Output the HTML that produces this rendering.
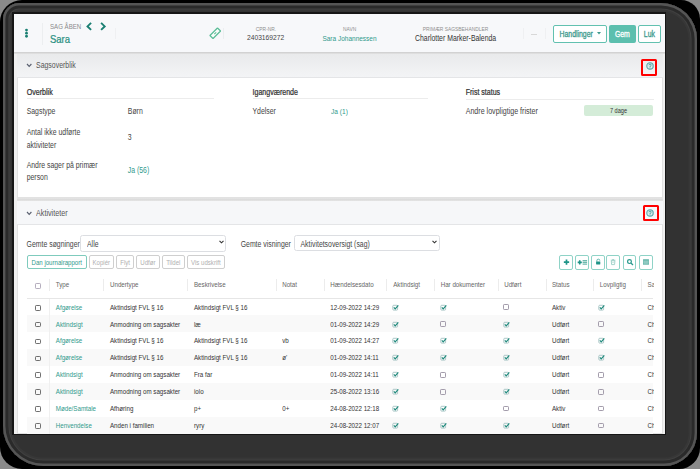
<!DOCTYPE html>
<html><head><meta charset="utf-8">
<style>
html,body{margin:0;padding:0;width:700px;height:469px;overflow:hidden;background:#8a8a8a;font-family:"Liberation Sans",sans-serif;}
.t{position:absolute;white-space:nowrap;line-height:1.15;}
.b{position:absolute;}
</style></head><body>
<div class="b" style="left:0.00px;top:0.00px;width:700.00px;height:469.00px;background:#000;border-radius:22px 19px 21px 22px"></div>
<div class="b" style="left:3.00px;top:3.00px;width:694.00px;height:463.00px;border-radius:16px 36px 33px 40px;background:#323232;box-shadow:inset 0 0 0 2.4px #555, inset 0 0 0 5.4px #2a2a2a, inset 0 0 0 6.4px #404040, inset 0 0 0 8.4px #373737"></div>
<div class="b" style="left:12.30px;top:12.30px;width:654.00px;height:423.00px;background:#161616"></div>
<div class="b" style="left:14.00px;top:14.00px;width:651.00px;height:420.00px;background:#f0f0f0"></div>
<div class="b" style="left:14.00px;top:14.00px;width:651.00px;height:38.00px;background:#f7f8fa;border-bottom:1.3px solid #d2d2d2"></div>
<svg class="b" style="left:23.70px;top:28.20px" width="5" height="10.5" viewBox="0 0 5 10.5"><circle cx="2.5" cy="2.05" r="1.4" fill="#1a7f72"/><circle cx="2.5" cy="5.15" r="1.4" fill="#1a7f72"/><circle cx="2.5" cy="8.25" r="1.4" fill="#1a7f72"/></svg>
<div class="b" style="left:41.60px;top:23.00px;width:1.00px;height:21.50px;background:#eceef0"></div>
<div class="t" style="left:50.00px;top:22.34px;font-size:6.1px;color:#8a8a8a;font-weight:400;transform:scaleY(1.28);">SAG ÅBEN</div>
<svg class="b" style="left:86.00px;top:21.80px" width="22" height="9" viewBox="0 0 22 9"><path d="M5.1 0.9 L1.5 4.4 L5.1 7.9 M15.1 0.9 L18.7 4.4 L15.1 7.9" fill="none" stroke="#1a7f72" stroke-width="1.9"/></svg>
<div class="t" style="left:50.00px;top:35.05px;font-size:9.5px;color:#2a9081;font-weight:400;transform:scaleY(1.18);-webkit-text-stroke:0.2px #2a9081">Sara</div>
<div class="b" style="left:114.50px;top:28.00px;width:1.00px;height:10.60px;background:#eff0f2"></div>
<svg class="b" style="left:208.60px;top:27.40px" width="12.5" height="12.5" viewBox="0 0 12.5 12.5"><g transform="rotate(-45 6.25 6.25)"><rect x="0.9" y="4.05" width="10.7" height="4.4" rx="0.4" fill="#fafcfb" stroke="#5bbd97" stroke-width="1.25"/><path d="M4.9 6.25 H7.6" stroke="#5bbd97" stroke-width="1.0"/></g></svg>
<div class="b" style="left:223.20px;top:27.80px;width:1.00px;height:11.00px;background:#eceef0"></div>
<div class="t" style="left:266.00px;top:26.59px;font-size:4.9px;color:#8f8f8f;font-weight:400;transform:translateX(-50%) scaleY(1.18);">CPR-NR.</div>
<div class="t" style="left:265.60px;top:34.20px;font-size:6.7px;color:#444;font-weight:400;transform:translateX(-50%) scaleY(1.18);">2403169272</div>
<div class="t" style="left:349.70px;top:26.59px;font-size:4.9px;color:#8f8f8f;font-weight:400;transform:translateX(-50%) scaleY(1.18);">NAVN</div>
<div class="t" style="left:349.50px;top:35.01px;font-size:6.5px;color:#309a8c;font-weight:400;transform:translateX(-50%) scaleY(1.18);">Sara Johannessen</div>
<div class="t" style="left:455.50px;top:26.59px;font-size:4.9px;color:#8f8f8f;font-weight:400;transform:translateX(-50%) scaleY(1.18);">PRIMÆR SAGSBEHANDLER</div>
<div class="t" style="left:455.60px;top:34.79px;font-size:6.9px;color:#333;font-weight:400;transform:translateX(-50%) scaleY(1.18);">Charlotter Marker-Balenda</div>
<div class="b" style="left:523.00px;top:28.00px;width:1.00px;height:10.60px;background:#eff0f2"></div>
<div class="b" style="left:531.00px;top:33.50px;width:6.00px;height:0.80px;background:#d8d8d8"></div>
<div class="b" style="left:545.00px;top:28.00px;width:1.00px;height:10.60px;background:#eff0f2"></div>
<div class="b" style="left:553.30px;top:24.80px;width:54.20px;height:17.80px;box-sizing:border-box;border:1.2px solid #62c1b0;border-radius:2px;background:#fff"></div>
<div class="t" style="left:559.50px;top:31.09px;font-size:6.9px;color:#3d9a8d;font-weight:400;transform:scaleY(1.18);-webkit-text-stroke:0.25px #3d9a8d">Handlinger</div>
<svg class="b" style="left:597.40px;top:32.30px" width="4" height="3" viewBox="0 0 4 3"><path d="M0 0 H4 L2 2.4Z" fill="#3d9a8d"/></svg>
<div class="b" style="left:609.00px;top:24.80px;width:26.80px;height:17.80px;background:#5cbfae;border-radius:2px"></div>
<div class="t" style="left:622.40px;top:31.09px;font-size:6.9px;color:#fff;font-weight:400;transform:translateX(-50%) scaleY(1.18);-webkit-text-stroke:0.25px #fff">Gem</div>
<div class="b" style="left:637.80px;top:24.80px;width:23.20px;height:17.80px;box-sizing:border-box;border:1.2px solid #62c1b0;border-radius:2px;background:#fff"></div>
<div class="t" style="left:649.40px;top:31.09px;font-size:6.9px;color:#3d9a8d;font-weight:400;transform:translateX(-50%) scaleY(1.18);-webkit-text-stroke:0.25px #3d9a8d">Luk</div>
<div class="b" style="left:16.80px;top:53.50px;width:646.20px;height:144.50px;box-sizing:border-box;background:#fff;border:1px solid #e2e2e2"></div>
<div class="b" style="left:16.80px;top:197.50px;width:646.20px;height:3.50px;background:linear-gradient(#e6e6e6,#dcdcdc 50%,#e4e4e4)"></div>
<div class="b" style="left:16.80px;top:53.50px;width:646.20px;height:24.00px;box-sizing:border-box;background:linear-gradient(#e9eaeb,#f3f4f6);border-bottom:1px solid #e4e5e7"></div>
<div class="b" style="left:14.00px;top:53.30px;width:651.00px;height:1.20px;background:#dedede"></div>
<svg class="b" style="left:26.00px;top:63.20px" width="6" height="5" viewBox="0 0 6 5"><path d="M1.0 1.0 L3.2 3.3 L5.4 1.0" fill="none" stroke="#5a6070" stroke-width="1.15"/></svg>
<div class="t" style="left:36.00px;top:61.66px;font-size:6.95px;color:#555;font-weight:400;transform:scaleY(1.18);">Sagsoverblik</div>
<div class="b" style="left:641.00px;top:58.70px;width:15.80px;height:16.90px;box-sizing:border-box;border:2px solid #f00;border-radius:1.5px"></div>
<svg class="b" style="left:646.20px;top:62.00px" width="8" height="8" viewBox="0 0 8 8"><circle cx="4" cy="4" r="3.2" fill="#d9ecec" stroke="#5aa6a8" stroke-width="1.1"/><path d="M3.0 3.2 a1.05 1.05 0 1 1 1.5 0.9 L4 4.7 V5.1" fill="none" stroke="#2f8f92" stroke-width="0.9"/><circle cx="4" cy="6.0" r="0.5" fill="#2f8f92"/></svg>
<div class="t" style="left:26.70px;top:88.58px;font-size:7.1px;color:#333;font-weight:400;transform:scaleY(1.18);-webkit-text-stroke:0.2px #333">Overblik</div>
<div class="b" style="left:26.70px;top:98.20px;width:187.00px;height:1.00px;background:#ececec"></div>
<div class="t" style="left:26.70px;top:107.89px;font-size:6.9px;color:#444;font-weight:400;transform:scaleY(1.18);">Sagstype</div>
<div class="t" style="left:127.80px;top:107.89px;font-size:6.9px;color:#444;font-weight:400;transform:scaleY(1.18);">Børn</div>
<div class="t" style="left:26.70px;top:129.49px;font-size:6.9px;color:#444;font-weight:400;transform:scaleY(1.18);">Antal ikke udførte</div>
<div class="t" style="left:26.70px;top:141.69px;font-size:6.9px;color:#444;font-weight:400;transform:scaleY(1.18);">aktiviteter</div>
<div class="t" style="left:127.80px;top:134.49px;font-size:6.9px;color:#444;font-weight:400;transform:scaleY(1.18);">3</div>
<div class="t" style="left:26.70px;top:162.19px;font-size:6.9px;color:#444;font-weight:400;transform:scaleY(1.18);">Andre sager på primær</div>
<div class="t" style="left:26.70px;top:173.69px;font-size:6.9px;color:#444;font-weight:400;transform:scaleY(1.18);">person</div>
<div class="t" style="left:127.80px;top:167.19px;font-size:6.9px;color:#309a8c;font-weight:400;transform:scaleY(1.18);">Ja (56)</div>
<div class="t" style="left:252.50px;top:88.60px;font-size:7.05px;color:#333;font-weight:400;transform:scaleY(1.18);-webkit-text-stroke:0.2px #333">Igangværende</div>
<div class="b" style="left:252.50px;top:98.20px;width:175.50px;height:1.00px;background:#ececec"></div>
<div class="t" style="left:252.50px;top:107.89px;font-size:6.9px;color:#444;font-weight:400;transform:scaleY(1.18);">Ydelser</div>
<div class="t" style="left:331.00px;top:108.05px;font-size:6.6px;color:#309a8c;font-weight:400;transform:scaleY(1.18);">Ja (1)</div>
<div class="t" style="left:465.70px;top:88.60px;font-size:7.05px;color:#333;font-weight:400;transform:scaleY(1.18);-webkit-text-stroke:0.2px #333">Frist status</div>
<div class="b" style="left:465.70px;top:98.70px;width:188.00px;height:1.00px;background:#ececec"></div>
<div class="t" style="left:465.70px;top:107.98px;font-size:7.1px;color:#444;font-weight:400;transform:scaleY(1.18);">Andre lovpligtige frister</div>
<div class="b" style="left:584.30px;top:105.20px;width:68.50px;height:10.80px;background:#d4ecd8;border-radius:2px"></div>
<div class="t" style="left:618.50px;top:107.91px;font-size:5.6px;color:#333;font-weight:400;transform:translateX(-50%) scaleY(1.18);">7 dage</div>
<div class="b" style="left:16.80px;top:201.00px;width:646.20px;height:233.00px;box-sizing:border-box;background:#fff;border:1px solid #e2e2e2"></div>
<div class="b" style="left:16.80px;top:201.00px;width:646.20px;height:23.60px;box-sizing:border-box;background:#f6f7f9;border-bottom:1px solid #e4e5e7"></div>
<svg class="b" style="left:26.00px;top:211.20px" width="6" height="5" viewBox="0 0 6 5"><path d="M1.0 1.0 L3.2 3.3 L5.4 1.0" fill="none" stroke="#5a6070" stroke-width="1.15"/></svg>
<div class="t" style="left:36.00px;top:209.82px;font-size:7.2px;color:#555;font-weight:400;transform:scaleY(1.18);">Aktiviteter</div>
<div class="b" style="left:642.70px;top:204.80px;width:16.20px;height:16.20px;box-sizing:border-box;border:2px solid #f00;border-radius:1.5px"></div>
<svg class="b" style="left:646.20px;top:208.90px" width="8" height="8" viewBox="0 0 8 8"><circle cx="4" cy="4" r="3.2" fill="#d9ecec" stroke="#5aa6a8" stroke-width="1.1"/><path d="M3.0 3.2 a1.05 1.05 0 1 1 1.5 0.9 L4 4.7 V5.1" fill="none" stroke="#2f8f92" stroke-width="0.9"/><circle cx="4" cy="6.0" r="0.5" fill="#2f8f92"/></svg>
<div class="t" style="left:26.60px;top:240.59px;font-size:6.9px;color:#444;font-weight:400;transform:scaleY(1.18);">Gemte søgninger</div>
<div class="b" style="left:80.00px;top:234.70px;width:146.30px;height:17.30px;box-sizing:border-box;border:1px solid #dcdee2;border-radius:2.5px;background:#fff"></div>
<div class="t" style="left:87.00px;top:240.69px;font-size:6.9px;color:#444;font-weight:400;transform:scaleY(1.18);">Alle</div>
<svg class="b" style="left:218.60px;top:240.40px" width="5" height="4" viewBox="0 0 5 4"><path d="M0.5 0.8 L2.5 2.8 L4.5 0.8" fill="none" stroke="#333" stroke-width="1.1"/></svg>
<div class="t" style="left:240.70px;top:240.59px;font-size:6.9px;color:#444;font-weight:400;transform:scaleY(1.18);">Gemte visninger</div>
<div class="b" style="left:294.20px;top:234.60px;width:145.60px;height:16.90px;box-sizing:border-box;border:1px solid #dcdee2;border-radius:2.5px;background:#fff"></div>
<div class="t" style="left:300.50px;top:240.69px;font-size:6.9px;color:#444;font-weight:400;transform:scaleY(1.18);">Aktivitetsoversigt (sag)</div>
<svg class="b" style="left:432.10px;top:240.30px" width="5" height="4" viewBox="0 0 5 4"><path d="M0.5 0.8 L2.5 2.8 L4.5 0.8" fill="none" stroke="#333" stroke-width="1.1"/></svg>
<div class="b" style="left:26.90px;top:255.40px;width:59.70px;height:14.10px;box-sizing:border-box;border:1px solid #7fcbbd;border-radius:2px;background:#fff"></div>
<div class="t" style="left:56.75px;top:259.13px;font-size:6.1px;color:#309a8c;font-weight:400;transform:translateX(-50%) scaleY(1.18);">Dan journalrapport</div>
<div class="b" style="left:88.50px;top:255.40px;width:25.50px;height:14.10px;box-sizing:border-box;border:1px solid #cfcfcf;border-radius:2px;background:#fff"></div>
<div class="t" style="left:101.25px;top:259.13px;font-size:6.1px;color:#b0b0b0;font-weight:400;transform:translateX(-50%) scaleY(1.18);">Kopiér</div>
<div class="b" style="left:116.20px;top:255.40px;width:17.90px;height:14.10px;box-sizing:border-box;border:1px solid #cfcfcf;border-radius:2px;background:#fff"></div>
<div class="t" style="left:125.15px;top:259.13px;font-size:6.1px;color:#b0b0b0;font-weight:400;transform:translateX(-50%) scaleY(1.18);">Flyt</div>
<div class="b" style="left:136.30px;top:255.40px;width:23.30px;height:14.10px;box-sizing:border-box;border:1px solid #cfcfcf;border-radius:2px;background:#fff"></div>
<div class="t" style="left:147.95px;top:259.13px;font-size:6.1px;color:#b0b0b0;font-weight:400;transform:translateX(-50%) scaleY(1.18);">Udfør</div>
<div class="b" style="left:161.80px;top:255.40px;width:23.00px;height:14.10px;box-sizing:border-box;border:1px solid #cfcfcf;border-radius:2px;background:#fff"></div>
<div class="t" style="left:173.30px;top:259.13px;font-size:6.1px;color:#b0b0b0;font-weight:400;transform:translateX(-50%) scaleY(1.18);">Tildel</div>
<div class="b" style="left:187.00px;top:255.40px;width:37.70px;height:14.10px;box-sizing:border-box;border:1px solid #cfcfcf;border-radius:2px;background:#fff"></div>
<div class="t" style="left:205.85px;top:259.13px;font-size:6.1px;color:#b0b0b0;font-weight:400;transform:translateX(-50%) scaleY(1.18);">Vis udskrift</div>
<div class="b" style="left:559.00px;top:255.10px;width:13.70px;height:14.60px;box-sizing:border-box;border:1px solid #8fd3c7;border-radius:2px;background:#fff"></div>
<svg class="b" style="left:559.00px;top:255.10px" width="13.7" height="14.6" viewBox="0 0 13.7 14.6"><path d="M7.5 4.4 V9.7 M4.85 7.05 H10.15" stroke="#1f9488" stroke-width="1.7"/></svg>
<div class="b" style="left:574.90px;top:255.10px;width:13.70px;height:14.60px;box-sizing:border-box;border:1px solid #8fd3c7;border-radius:2px;background:#fff"></div>
<svg class="b" style="left:574.90px;top:255.10px" width="13.7" height="14.6" viewBox="0 0 13.7 14.6"><path d="M4.75 5.3 V9.4 M2.7 7.35 H6.8" stroke="#1f9488" stroke-width="1.6"/><path d="M7.6 5.6 H12.1 M7.6 7.35 H12.1 M7.6 9.1 H12.1" stroke="#6db9ae" stroke-width="1.2"/></svg>
<div class="b" style="left:590.90px;top:255.10px;width:13.70px;height:14.60px;box-sizing:border-box;border:1px solid #8fd3c7;border-radius:2px;background:#fff"></div>
<svg class="b" style="left:590.90px;top:255.10px" width="13.7" height="14.6" viewBox="0 0 13.7 14.6"><path d="M5.9 6.6 V5.6 a1.45 1.45 0 0 1 2.9 0" fill="none" stroke="#4fb0a4" stroke-width="0.9"/><rect x="5.1" y="6.5" width="4.2" height="2.9" rx="0.3" fill="#1f9488"/></svg>
<div class="b" style="left:606.40px;top:255.10px;width:13.70px;height:14.60px;box-sizing:border-box;border:1px solid #8fd3c7;border-radius:2px;background:#fff"></div>
<svg class="b" style="left:606.40px;top:255.10px" width="13.7" height="14.6" viewBox="0 0 13.7 14.6"><path d="M5.3 5.8 L5.6 9.6 H8.6 L8.9 5.8 Z M4.8 5.2 H9.4 M6.2 4.5 H8" fill="none" stroke="#9acfc6" stroke-width="0.9"/><path d="M5.5 7.6 H8.7" stroke="#b9ddd7" stroke-width="0.7"/></svg>
<div class="b" style="left:622.50px;top:255.10px;width:13.70px;height:14.60px;box-sizing:border-box;border:1px solid #8fd3c7;border-radius:2px;background:#fff"></div>
<svg class="b" style="left:622.50px;top:255.10px" width="13.7" height="14.6" viewBox="0 0 13.7 14.6"><circle cx="6.5" cy="6.6" r="1.9" fill="none" stroke="#2a9a8e" stroke-width="1.2"/><path d="M7.9 8 L10 9.9" stroke="#2a9a8e" stroke-width="1.3"/></svg>
<div class="b" style="left:638.90px;top:255.10px;width:13.70px;height:14.60px;box-sizing:border-box;border:1px solid #8fd3c7;border-radius:2px;background:#fff"></div>
<svg class="b" style="left:638.90px;top:255.10px" width="13.7" height="14.6" viewBox="0 0 13.7 14.6"><rect x="4" y="4.2" width="6" height="5.5" rx="0.4" fill="#5fb3a7"/><path d="M4 6.1 H10 M4 7.9 H10 M6 6.1 V9.7 M8 6.1 V9.7" stroke="#c9e6e1" stroke-width="0.5"/></svg>
<div class="b" style="left:26.9px;top:272px;width:626.7px;height:162px;overflow:hidden">
<div class="b" style="left:22.30px;top:7.30px;width:1.00px;height:11.40px;background:#ececec"></div>
<div class="b" style="left:76.40px;top:7.30px;width:1.00px;height:11.40px;background:#ececec"></div>
<div class="b" style="left:160.40px;top:7.30px;width:1.00px;height:11.40px;background:#ececec"></div>
<div class="b" style="left:248.80px;top:7.30px;width:1.00px;height:11.40px;background:#ececec"></div>
<div class="b" style="left:296.80px;top:7.30px;width:1.00px;height:11.40px;background:#ececec"></div>
<div class="b" style="left:359.30px;top:7.30px;width:1.00px;height:11.40px;background:#ececec"></div>
<div class="b" style="left:406.80px;top:7.30px;width:1.00px;height:11.40px;background:#ececec"></div>
<div class="b" style="left:470.80px;top:7.30px;width:1.00px;height:11.40px;background:#ececec"></div>
<div class="b" style="left:518.80px;top:7.30px;width:1.00px;height:11.40px;background:#ececec"></div>
<div class="b" style="left:566.10px;top:7.30px;width:1.00px;height:11.40px;background:#ececec"></div>
<div class="b" style="left:614.00px;top:7.30px;width:1.00px;height:11.40px;background:#ececec"></div>
<div class="t" style="left:28.90px;top:9.17px;font-size:6.2px;color:#666;font-weight:400;transform:scaleY(1.18);">Type</div>
<div class="t" style="left:83.10px;top:9.17px;font-size:6.2px;color:#666;font-weight:400;transform:scaleY(1.18);">Undertype</div>
<div class="t" style="left:167.10px;top:9.17px;font-size:6.2px;color:#666;font-weight:400;transform:scaleY(1.18);">Beskrivelse</div>
<div class="t" style="left:255.30px;top:9.17px;font-size:6.2px;color:#666;font-weight:400;transform:scaleY(1.18);">Notat</div>
<div class="t" style="left:303.40px;top:9.17px;font-size:6.2px;color:#666;font-weight:400;transform:scaleY(1.18);">Hændelsesdato</div>
<div class="t" style="left:366.30px;top:9.17px;font-size:6.2px;color:#666;font-weight:400;transform:scaleY(1.18);">Aktindsigt</div>
<div class="t" style="left:413.80px;top:9.17px;font-size:6.2px;color:#666;font-weight:400;transform:scaleY(1.18);">Har dokumenter</div>
<div class="t" style="left:477.30px;top:9.17px;font-size:6.2px;color:#666;font-weight:400;transform:scaleY(1.18);">Udført</div>
<div class="t" style="left:525.10px;top:9.17px;font-size:6.2px;color:#666;font-weight:400;transform:scaleY(1.18);">Status</div>
<div class="t" style="left:572.90px;top:9.17px;font-size:6.2px;color:#666;font-weight:400;transform:scaleY(1.18);">Lovpligtig</div>
<div class="t" style="left:620.70px;top:9.17px;font-size:6.2px;color:#666;font-weight:400;transform:scaleY(1.18);">Sagsbehandler</div>
<div class="b" style="left:8.10px;top:10.80px;width:6.30px;height:6.30px;box-sizing:border-box;border:0.8px solid #b4adbd;border-radius:1.2px"></div>
<div class="b" style="left:0.00px;top:25.60px;width:626.50px;height:1.00px;background:#e6e6e6"></div>
<div class="b" style="left:22.00px;top:26.50px;width:1.00px;height:16.90px;background:#f0f0f0"></div>
<div class="b" style="left:8.20px;top:32.80px;width:6.00px;height:5.80px;box-sizing:border-box;border:1px solid #6f6f6f;border-radius:1.2px"></div>
<div class="t" style="left:28.90px;top:31.67px;font-size:6.2px;color:#309a8c;font-weight:400;transform:scaleY(1.18);">Afgørelse</div>
<div class="t" style="left:83.10px;top:31.67px;font-size:6.2px;color:#333;font-weight:400;transform:scaleY(1.18);">Aktindsigt FVL § 16</div>
<div class="t" style="left:167.10px;top:31.67px;font-size:6.2px;color:#333;font-weight:400;transform:scaleY(1.18);">Aktindsigt FVL § 16</div>
<div class="t" style="left:303.40px;top:31.67px;font-size:6.2px;color:#333;font-weight:400;transform:scaleY(1.18);">12-09-2022 14:29</div>
<svg class="b" style="left:365.60px;top:31.60px" width="7" height="7" viewBox="0 0 7 7"><rect x="0.8" y="1.3" width="4.8" height="4.8" rx="0.8" fill="none" stroke="#9bb" stroke-width="0.8"/><path d="M1.8 3.4 L3.2 4.8 L6.3 1.4" fill="none" stroke="#1f8a7c" stroke-width="1.2"/></svg>
<svg class="b" style="left:413.30px;top:31.60px" width="7" height="7" viewBox="0 0 7 7"><rect x="0.8" y="1.3" width="4.8" height="4.8" rx="0.8" fill="none" stroke="#9bb" stroke-width="0.8"/><path d="M1.8 3.4 L3.2 4.8 L6.3 1.4" fill="none" stroke="#1f8a7c" stroke-width="1.2"/></svg>
<div class="b" style="left:476.40px;top:32.20px;width:6.00px;height:5.90px;box-sizing:border-box;border:0.85px solid #a39cab;border-radius:1.2px"></div>
<div class="t" style="left:525.10px;top:31.67px;font-size:6.2px;color:#333;font-weight:400;transform:scaleY(1.18);">Aktiv</div>
<svg class="b" style="left:571.60px;top:31.60px" width="7" height="7" viewBox="0 0 7 7"><rect x="0.8" y="1.3" width="4.8" height="4.8" rx="0.8" fill="none" stroke="#9bb" stroke-width="0.8"/><path d="M1.8 3.4 L3.2 4.8 L6.3 1.4" fill="none" stroke="#1f8a7c" stroke-width="1.2"/></svg>
<div class="t" style="left:620.70px;top:31.67px;font-size:6.2px;color:#333;font-weight:400;transform:scaleY(1.18);">Charlotter Marker-Balenda</div>
<div class="b" style="left:0.00px;top:43.40px;width:626.50px;height:16.90px;background:#f9f9f9"></div>
<div class="b" style="left:22.00px;top:43.40px;width:1.00px;height:16.90px;background:#f0f0f0"></div>
<div class="b" style="left:8.20px;top:49.70px;width:6.00px;height:5.80px;box-sizing:border-box;border:1px solid #6f6f6f;border-radius:1.2px"></div>
<div class="t" style="left:28.90px;top:48.57px;font-size:6.2px;color:#309a8c;font-weight:400;transform:scaleY(1.18);">Aktindsigt</div>
<div class="t" style="left:83.10px;top:48.57px;font-size:6.2px;color:#333;font-weight:400;transform:scaleY(1.18);">Anmodning om sagsakter</div>
<div class="t" style="left:167.10px;top:48.57px;font-size:6.2px;color:#333;font-weight:400;transform:scaleY(1.18);">læ</div>
<div class="t" style="left:303.40px;top:48.57px;font-size:6.2px;color:#333;font-weight:400;transform:scaleY(1.18);">01-09-2022 14:29</div>
<svg class="b" style="left:365.60px;top:48.50px" width="7" height="7" viewBox="0 0 7 7"><rect x="0.8" y="1.3" width="4.8" height="4.8" rx="0.8" fill="none" stroke="#9bb" stroke-width="0.8"/><path d="M1.8 3.4 L3.2 4.8 L6.3 1.4" fill="none" stroke="#1f8a7c" stroke-width="1.2"/></svg>
<div class="b" style="left:413.30px;top:49.10px;width:6.00px;height:5.90px;box-sizing:border-box;border:0.85px solid #a39cab;border-radius:1.2px"></div>
<svg class="b" style="left:476.40px;top:48.50px" width="7" height="7" viewBox="0 0 7 7"><rect x="0.8" y="1.3" width="4.8" height="4.8" rx="0.8" fill="none" stroke="#9bb" stroke-width="0.8"/><path d="M1.8 3.4 L3.2 4.8 L6.3 1.4" fill="none" stroke="#1f8a7c" stroke-width="1.2"/></svg>
<div class="t" style="left:525.10px;top:48.57px;font-size:6.2px;color:#333;font-weight:400;transform:scaleY(1.18);">Udført</div>
<div class="b" style="left:571.60px;top:49.10px;width:6.00px;height:5.90px;box-sizing:border-box;border:0.85px solid #a39cab;border-radius:1.2px"></div>
<div class="t" style="left:620.70px;top:48.57px;font-size:6.2px;color:#333;font-weight:400;transform:scaleY(1.18);">Charlotter Marker-Balenda</div>
<div class="b" style="left:22.00px;top:60.30px;width:1.00px;height:16.90px;background:#f0f0f0"></div>
<div class="b" style="left:8.20px;top:66.60px;width:6.00px;height:5.80px;box-sizing:border-box;border:1px solid #6f6f6f;border-radius:1.2px"></div>
<div class="t" style="left:28.90px;top:65.47px;font-size:6.2px;color:#309a8c;font-weight:400;transform:scaleY(1.18);">Afgørelse</div>
<div class="t" style="left:83.10px;top:65.47px;font-size:6.2px;color:#333;font-weight:400;transform:scaleY(1.18);">Aktindsigt FVL § 16</div>
<div class="t" style="left:167.10px;top:65.47px;font-size:6.2px;color:#333;font-weight:400;transform:scaleY(1.18);">Aktindsigt FVL § 16</div>
<div class="t" style="left:255.30px;top:65.47px;font-size:6.2px;color:#333;font-weight:400;transform:scaleY(1.18);">vb</div>
<div class="t" style="left:303.40px;top:65.47px;font-size:6.2px;color:#333;font-weight:400;transform:scaleY(1.18);">01-09-2022 14:27</div>
<svg class="b" style="left:365.60px;top:65.40px" width="7" height="7" viewBox="0 0 7 7"><rect x="0.8" y="1.3" width="4.8" height="4.8" rx="0.8" fill="none" stroke="#9bb" stroke-width="0.8"/><path d="M1.8 3.4 L3.2 4.8 L6.3 1.4" fill="none" stroke="#1f8a7c" stroke-width="1.2"/></svg>
<svg class="b" style="left:413.30px;top:65.40px" width="7" height="7" viewBox="0 0 7 7"><rect x="0.8" y="1.3" width="4.8" height="4.8" rx="0.8" fill="none" stroke="#9bb" stroke-width="0.8"/><path d="M1.8 3.4 L3.2 4.8 L6.3 1.4" fill="none" stroke="#1f8a7c" stroke-width="1.2"/></svg>
<svg class="b" style="left:476.40px;top:65.40px" width="7" height="7" viewBox="0 0 7 7"><rect x="0.8" y="1.3" width="4.8" height="4.8" rx="0.8" fill="none" stroke="#9bb" stroke-width="0.8"/><path d="M1.8 3.4 L3.2 4.8 L6.3 1.4" fill="none" stroke="#1f8a7c" stroke-width="1.2"/></svg>
<div class="t" style="left:525.10px;top:65.47px;font-size:6.2px;color:#333;font-weight:400;transform:scaleY(1.18);">Udført</div>
<svg class="b" style="left:571.60px;top:65.40px" width="7" height="7" viewBox="0 0 7 7"><rect x="0.8" y="1.3" width="4.8" height="4.8" rx="0.8" fill="none" stroke="#9bb" stroke-width="0.8"/><path d="M1.8 3.4 L3.2 4.8 L6.3 1.4" fill="none" stroke="#1f8a7c" stroke-width="1.2"/></svg>
<div class="t" style="left:620.70px;top:65.47px;font-size:6.2px;color:#333;font-weight:400;transform:scaleY(1.18);">Charlotter Marker-Balenda</div>
<div class="b" style="left:0.00px;top:77.20px;width:626.50px;height:16.90px;background:#f9f9f9"></div>
<div class="b" style="left:22.00px;top:77.20px;width:1.00px;height:16.90px;background:#f0f0f0"></div>
<div class="b" style="left:8.20px;top:83.50px;width:6.00px;height:5.80px;box-sizing:border-box;border:1px solid #6f6f6f;border-radius:1.2px"></div>
<div class="t" style="left:28.90px;top:82.37px;font-size:6.2px;color:#309a8c;font-weight:400;transform:scaleY(1.18);">Afgørelse</div>
<div class="t" style="left:83.10px;top:82.37px;font-size:6.2px;color:#333;font-weight:400;transform:scaleY(1.18);">Aktindsigt FVL § 16</div>
<div class="t" style="left:167.10px;top:82.37px;font-size:6.2px;color:#333;font-weight:400;transform:scaleY(1.18);">Aktindsigt FVL § 16</div>
<div class="t" style="left:255.30px;top:82.37px;font-size:6.2px;color:#333;font-weight:400;transform:scaleY(1.18);">ø'</div>
<div class="t" style="left:303.40px;top:82.37px;font-size:6.2px;color:#333;font-weight:400;transform:scaleY(1.18);">01-09-2022 14:11</div>
<svg class="b" style="left:365.60px;top:82.30px" width="7" height="7" viewBox="0 0 7 7"><rect x="0.8" y="1.3" width="4.8" height="4.8" rx="0.8" fill="none" stroke="#9bb" stroke-width="0.8"/><path d="M1.8 3.4 L3.2 4.8 L6.3 1.4" fill="none" stroke="#1f8a7c" stroke-width="1.2"/></svg>
<svg class="b" style="left:413.30px;top:82.30px" width="7" height="7" viewBox="0 0 7 7"><rect x="0.8" y="1.3" width="4.8" height="4.8" rx="0.8" fill="none" stroke="#9bb" stroke-width="0.8"/><path d="M1.8 3.4 L3.2 4.8 L6.3 1.4" fill="none" stroke="#1f8a7c" stroke-width="1.2"/></svg>
<svg class="b" style="left:476.40px;top:82.30px" width="7" height="7" viewBox="0 0 7 7"><rect x="0.8" y="1.3" width="4.8" height="4.8" rx="0.8" fill="none" stroke="#9bb" stroke-width="0.8"/><path d="M1.8 3.4 L3.2 4.8 L6.3 1.4" fill="none" stroke="#1f8a7c" stroke-width="1.2"/></svg>
<div class="t" style="left:525.10px;top:82.37px;font-size:6.2px;color:#333;font-weight:400;transform:scaleY(1.18);">Udført</div>
<svg class="b" style="left:571.60px;top:82.30px" width="7" height="7" viewBox="0 0 7 7"><rect x="0.8" y="1.3" width="4.8" height="4.8" rx="0.8" fill="none" stroke="#9bb" stroke-width="0.8"/><path d="M1.8 3.4 L3.2 4.8 L6.3 1.4" fill="none" stroke="#1f8a7c" stroke-width="1.2"/></svg>
<div class="t" style="left:620.70px;top:82.37px;font-size:6.2px;color:#333;font-weight:400;transform:scaleY(1.18);">Charlotter Marker-Balenda</div>
<div class="b" style="left:22.00px;top:94.10px;width:1.00px;height:16.90px;background:#f0f0f0"></div>
<div class="b" style="left:8.20px;top:100.40px;width:6.00px;height:5.80px;box-sizing:border-box;border:1px solid #6f6f6f;border-radius:1.2px"></div>
<div class="t" style="left:28.90px;top:99.27px;font-size:6.2px;color:#309a8c;font-weight:400;transform:scaleY(1.18);">Aktindsigt</div>
<div class="t" style="left:83.10px;top:99.27px;font-size:6.2px;color:#333;font-weight:400;transform:scaleY(1.18);">Anmodning om sagsakter</div>
<div class="t" style="left:167.10px;top:99.27px;font-size:6.2px;color:#333;font-weight:400;transform:scaleY(1.18);">Fra far</div>
<div class="t" style="left:303.40px;top:99.27px;font-size:6.2px;color:#333;font-weight:400;transform:scaleY(1.18);">01-09-2022 14:11</div>
<svg class="b" style="left:365.60px;top:99.20px" width="7" height="7" viewBox="0 0 7 7"><rect x="0.8" y="1.3" width="4.8" height="4.8" rx="0.8" fill="none" stroke="#9bb" stroke-width="0.8"/><path d="M1.8 3.4 L3.2 4.8 L6.3 1.4" fill="none" stroke="#1f8a7c" stroke-width="1.2"/></svg>
<div class="b" style="left:413.30px;top:99.80px;width:6.00px;height:5.90px;box-sizing:border-box;border:0.85px solid #a39cab;border-radius:1.2px"></div>
<svg class="b" style="left:476.40px;top:99.20px" width="7" height="7" viewBox="0 0 7 7"><rect x="0.8" y="1.3" width="4.8" height="4.8" rx="0.8" fill="none" stroke="#9bb" stroke-width="0.8"/><path d="M1.8 3.4 L3.2 4.8 L6.3 1.4" fill="none" stroke="#1f8a7c" stroke-width="1.2"/></svg>
<div class="t" style="left:525.10px;top:99.27px;font-size:6.2px;color:#333;font-weight:400;transform:scaleY(1.18);">Udført</div>
<div class="b" style="left:571.60px;top:99.80px;width:6.00px;height:5.90px;box-sizing:border-box;border:0.85px solid #a39cab;border-radius:1.2px"></div>
<div class="t" style="left:620.70px;top:99.27px;font-size:6.2px;color:#333;font-weight:400;transform:scaleY(1.18);">Charlotter Marker-Balenda</div>
<div class="b" style="left:0.00px;top:111.00px;width:626.50px;height:16.90px;background:#f9f9f9"></div>
<div class="b" style="left:22.00px;top:111.00px;width:1.00px;height:16.90px;background:#f0f0f0"></div>
<div class="b" style="left:8.20px;top:117.30px;width:6.00px;height:5.80px;box-sizing:border-box;border:1px solid #6f6f6f;border-radius:1.2px"></div>
<div class="t" style="left:28.90px;top:116.17px;font-size:6.2px;color:#309a8c;font-weight:400;transform:scaleY(1.18);">Aktindsigt</div>
<div class="t" style="left:83.10px;top:116.17px;font-size:6.2px;color:#333;font-weight:400;transform:scaleY(1.18);">Anmodning om sagsakter</div>
<div class="t" style="left:167.10px;top:116.17px;font-size:6.2px;color:#333;font-weight:400;transform:scaleY(1.18);">iolo</div>
<div class="t" style="left:303.40px;top:116.17px;font-size:6.2px;color:#333;font-weight:400;transform:scaleY(1.18);">25-08-2022 13:16</div>
<svg class="b" style="left:365.60px;top:116.10px" width="7" height="7" viewBox="0 0 7 7"><rect x="0.8" y="1.3" width="4.8" height="4.8" rx="0.8" fill="none" stroke="#9bb" stroke-width="0.8"/><path d="M1.8 3.4 L3.2 4.8 L6.3 1.4" fill="none" stroke="#1f8a7c" stroke-width="1.2"/></svg>
<div class="b" style="left:413.30px;top:116.70px;width:6.00px;height:5.90px;box-sizing:border-box;border:0.85px solid #a39cab;border-radius:1.2px"></div>
<svg class="b" style="left:476.40px;top:116.10px" width="7" height="7" viewBox="0 0 7 7"><rect x="0.8" y="1.3" width="4.8" height="4.8" rx="0.8" fill="none" stroke="#9bb" stroke-width="0.8"/><path d="M1.8 3.4 L3.2 4.8 L6.3 1.4" fill="none" stroke="#1f8a7c" stroke-width="1.2"/></svg>
<div class="t" style="left:525.10px;top:116.17px;font-size:6.2px;color:#333;font-weight:400;transform:scaleY(1.18);">Udført</div>
<div class="b" style="left:571.60px;top:116.70px;width:6.00px;height:5.90px;box-sizing:border-box;border:0.85px solid #a39cab;border-radius:1.2px"></div>
<div class="t" style="left:620.70px;top:116.17px;font-size:6.2px;color:#333;font-weight:400;transform:scaleY(1.18);">Charlotter Marker-Balenda</div>
<div class="b" style="left:22.00px;top:127.90px;width:1.00px;height:16.90px;background:#f0f0f0"></div>
<div class="b" style="left:8.20px;top:134.20px;width:6.00px;height:5.80px;box-sizing:border-box;border:1px solid #6f6f6f;border-radius:1.2px"></div>
<div class="t" style="left:28.90px;top:133.07px;font-size:6.2px;color:#309a8c;font-weight:400;transform:scaleY(1.18);">Møde/Samtale</div>
<div class="t" style="left:83.10px;top:133.07px;font-size:6.2px;color:#333;font-weight:400;transform:scaleY(1.18);">Afhøring</div>
<div class="t" style="left:167.10px;top:133.07px;font-size:6.2px;color:#333;font-weight:400;transform:scaleY(1.18);">p+</div>
<div class="t" style="left:255.30px;top:133.07px;font-size:6.2px;color:#333;font-weight:400;transform:scaleY(1.18);">0+</div>
<div class="t" style="left:303.40px;top:133.07px;font-size:6.2px;color:#333;font-weight:400;transform:scaleY(1.18);">24-08-2022 12:18</div>
<svg class="b" style="left:365.60px;top:133.00px" width="7" height="7" viewBox="0 0 7 7"><rect x="0.8" y="1.3" width="4.8" height="4.8" rx="0.8" fill="none" stroke="#9bb" stroke-width="0.8"/><path d="M1.8 3.4 L3.2 4.8 L6.3 1.4" fill="none" stroke="#1f8a7c" stroke-width="1.2"/></svg>
<svg class="b" style="left:413.30px;top:133.00px" width="7" height="7" viewBox="0 0 7 7"><rect x="0.8" y="1.3" width="4.8" height="4.8" rx="0.8" fill="none" stroke="#9bb" stroke-width="0.8"/><path d="M1.8 3.4 L3.2 4.8 L6.3 1.4" fill="none" stroke="#1f8a7c" stroke-width="1.2"/></svg>
<div class="b" style="left:476.40px;top:133.60px;width:6.00px;height:5.90px;box-sizing:border-box;border:0.85px solid #a39cab;border-radius:1.2px"></div>
<div class="t" style="left:525.10px;top:133.07px;font-size:6.2px;color:#333;font-weight:400;transform:scaleY(1.18);">Aktiv</div>
<div class="b" style="left:571.60px;top:133.60px;width:6.00px;height:5.90px;box-sizing:border-box;border:0.85px solid #a39cab;border-radius:1.2px"></div>
<div class="t" style="left:620.70px;top:133.07px;font-size:6.2px;color:#333;font-weight:400;transform:scaleY(1.18);">Charlotter Marker-Balenda</div>
<div class="b" style="left:0.00px;top:144.80px;width:626.50px;height:16.90px;background:#f9f9f9"></div>
<div class="b" style="left:22.00px;top:144.80px;width:1.00px;height:16.90px;background:#f0f0f0"></div>
<div class="b" style="left:8.20px;top:151.10px;width:6.00px;height:5.80px;box-sizing:border-box;border:1px solid #6f6f6f;border-radius:1.2px"></div>
<div class="t" style="left:28.90px;top:149.97px;font-size:6.2px;color:#309a8c;font-weight:400;transform:scaleY(1.18);">Henvendelse</div>
<div class="t" style="left:83.10px;top:149.97px;font-size:6.2px;color:#333;font-weight:400;transform:scaleY(1.18);">Anden i familien</div>
<div class="t" style="left:167.10px;top:149.97px;font-size:6.2px;color:#333;font-weight:400;transform:scaleY(1.18);">ryry</div>
<div class="t" style="left:303.40px;top:149.97px;font-size:6.2px;color:#333;font-weight:400;transform:scaleY(1.18);">24-08-2022 12:07</div>
<svg class="b" style="left:365.60px;top:149.90px" width="7" height="7" viewBox="0 0 7 7"><rect x="0.8" y="1.3" width="4.8" height="4.8" rx="0.8" fill="none" stroke="#9bb" stroke-width="0.8"/><path d="M1.8 3.4 L3.2 4.8 L6.3 1.4" fill="none" stroke="#1f8a7c" stroke-width="1.2"/></svg>
<svg class="b" style="left:413.30px;top:149.90px" width="7" height="7" viewBox="0 0 7 7"><rect x="0.8" y="1.3" width="4.8" height="4.8" rx="0.8" fill="none" stroke="#9bb" stroke-width="0.8"/><path d="M1.8 3.4 L3.2 4.8 L6.3 1.4" fill="none" stroke="#1f8a7c" stroke-width="1.2"/></svg>
<svg class="b" style="left:476.40px;top:149.90px" width="7" height="7" viewBox="0 0 7 7"><rect x="0.8" y="1.3" width="4.8" height="4.8" rx="0.8" fill="none" stroke="#9bb" stroke-width="0.8"/><path d="M1.8 3.4 L3.2 4.8 L6.3 1.4" fill="none" stroke="#1f8a7c" stroke-width="1.2"/></svg>
<div class="t" style="left:525.10px;top:149.97px;font-size:6.2px;color:#333;font-weight:400;transform:scaleY(1.18);">Udført</div>
<div class="b" style="left:571.60px;top:150.50px;width:6.00px;height:5.90px;box-sizing:border-box;border:0.85px solid #a39cab;border-radius:1.2px"></div>
<div class="t" style="left:620.70px;top:149.97px;font-size:6.2px;color:#333;font-weight:400;transform:scaleY(1.18);">Charlotter Marker-Balenda</div>
</div>
</body></html>
